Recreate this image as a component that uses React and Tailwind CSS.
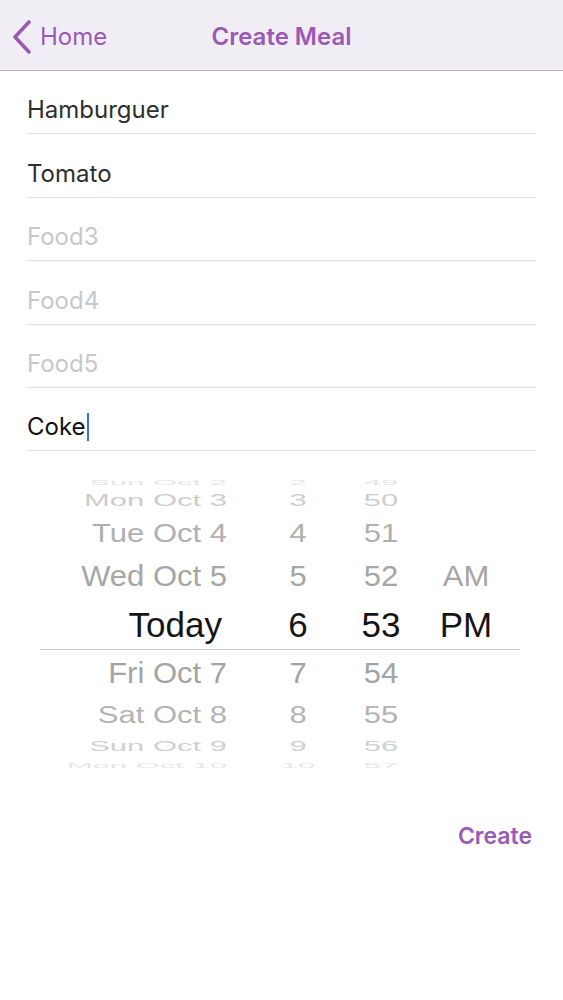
import React from "react";

const fields = [
  { value: "Hamburguer" },
  { value: "Tomato" },
  { placeholder: "Food3" },
  { placeholder: "Food4" },
  { placeholder: "Food5" },
  { value: "Coke", focused: true },
];

// picker rows, top to bottom (far rows are squashed like a wheel)
const rows = [
  { h: "h-[10px]", date: "Sun Oct 2", hr: "2", min: "49", cls: "text-[31px] text-[#e4e4e4] scale-y-[0.25]" },
  { h: "h-[26px]", date: "Mon Oct 3", hr: "3", min: "50", cls: "text-[31px] text-[#cdcdcd] scale-y-[0.55]" },
  { h: "h-[40px]", date: "Tue Oct 4", hr: "4", min: "51", cls: "text-[31px] text-[#b0b0b0] scale-y-[0.84]" },
  { h: "h-[46px]", date: "Wed Oct 5", hr: "5", min: "52", ap: "AM", cls: "text-[31px] text-[#a6a6a6] scale-y-[0.93]" },
  { h: "h-[51px]", date: "Today", hr: "6", min: "53", ap: "PM", cls: "text-[35px] text-[#151515]", sel: true },
  { h: "h-[46px]", date: "Fri Oct 7", hr: "7", min: "54", cls: "text-[31px] text-[#a4a4a4] scale-y-[0.93]" },
  { h: "h-[36px]", date: "Sat Oct 8", hr: "8", min: "55", cls: "text-[31px] text-[#b3b3b3] scale-y-[0.8]" },
  { h: "h-[26px]", date: "Sun Oct 9", hr: "9", min: "56", cls: "text-[31px] text-[#d0d0d0] scale-y-[0.5]" },
  { h: "h-[14px]", date: "Mon Oct 10", hr: "10", min: "57", cls: "text-[31px] text-[#e6e6e6] scale-y-[0.25]" },
];

export default function App() {
  return (
    <div className="w-[563px] h-[1000px] bg-white font-['Inter',sans-serif] overflow-hidden">
      {/* nav bar */}
      <header className="relative h-[71px] bg-[#f0eef4] border-b border-[#b9b9bd] flex items-center pt-[3px]">
        <button className="flex items-center gap-[8px] pl-[12px] text-[#9b59b6]">
          <svg width="20" height="34" viewBox="0 0 20 34" fill="none">
            <path d="M17 2 L3 17 L17 32" stroke="#9b59b6" strokeWidth="3.6" strokeLinecap="round" strokeLinejoin="round" />
          </svg>
          <span className="text-[24px] leading-none">Home</span>
        </button>
        <h1 className="absolute left-0 right-0 text-center text-[24px] font-semibold text-[#9b59b6] leading-none pointer-events-none">
          Create Meal
        </h1>
      </header>

      {/* food fields */}
      <div className="pl-[27px] pr-[27px]">
        {fields.map((f, i) => (
          <div key={i} className="h-[63.4px] border-b border-[#e1e1e3] flex items-end pb-[9px]">
            {f.value ? (
              <span className={`text-[24px] leading-[29px] ${f.focused ? "text-[#111]" : "text-[#2e2e2e]"} flex items-center`}>
                {f.value}
                {f.focused && <span className="inline-block w-[2px] h-[28px] bg-[#3d6fe3] ml-[1px]" />}
              </span>
            ) : (
              <span className="text-[24px] leading-[29px] text-[#c7c7cd]">{f.placeholder}</span>
            )}
          </div>
        ))}
      </div>

      {/* date picker */}
      <div className="mt-[26px] ml-[40px] w-[480px] font-['Liberation_Sans',Arial,sans-serif]">
        {rows.map((r, i) => (
          <div key={i} className={`${r.h} flex items-center ${r.sel ? "border-b border-[#c9c9c9]" : ""}`}>
            <div className={`flex items-center whitespace-nowrap leading-none ${r.cls}`}>
              <span className={`w-[187px] text-right ${r.sel ? "pr-[5px]" : ""}`}>{r.date}</span>
              <span className="ml-[29px] w-[84px] text-center">{r.hr}</span>
              <span className="w-[82px] text-center">{r.min}</span>
              <span className="w-[88px] text-center">{r.ap || ""}</span>
            </div>
          </div>
        ))}
      </div>

      <div className="mt-[42px] flex justify-end pr-[31px]">
        <button className="h-[44px] text-[23px] font-semibold text-[#9b59b6]">Create</button>
      </div>
    </div>
  );
}
